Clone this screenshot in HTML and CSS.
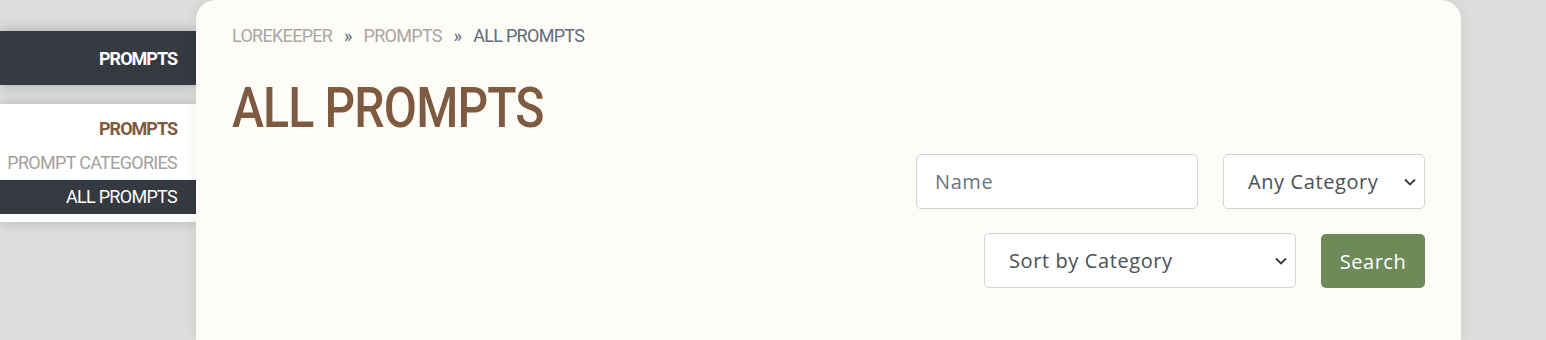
FILE: index.html
```html
<!DOCTYPE html>
<html lang="en">
<head>
    <meta charset="UTF-8">
    <title>All Prompts</title>
    <link rel="stylesheet" href="styles.css">
</head>
<body>
    <div class="pagina">
        <div class="lateral">
            <div class="lateral-topo">PROMPTS</div>
            <div class="lateral-menu">
                <div class="menu-titulo">PROMPTS</div>
                <a class="menu-item" href="#">PROMPT CATEGORIES</a>
                <a class="menu-item ativo" href="#">ALL PROMPTS</a>
            </div>
        </div>
        <div class="conteudo">
            <div class="migalhas">
                <a href="#">LOREKEEPER</a>
                <span class="sep">&raquo;</span>
                <a href="#">PROMPTS</a>
                <span class="sep">&raquo;</span>
                <span class="atual">ALL PROMPTS</span>
            </div>
            <h1 class="titulo"><span>ALL PROMPTS</span></h1>
            <form class="busca">
                <div class="linha">
                    <input class="campo campo-nome" type="text" placeholder="Name">
                    <select class="campo seletor seletor-cat">
                        <option>Any Category</option>
                    </select>
                </div>
                <div class="linha">
                    <select class="campo seletor seletor-ordem">
                        <option>Sort by Category</option>
                    </select>
                    <button class="botao" type="button">Search</button>
                </div>
            </form>
        </div>
    </div>
</body>
</html>
```

FILE: styles.css
```css
body {
    margin: 0;
    background-color: #dddddd;
    font-family: "Roboto", "Liberation Sans", sans-serif;
    overflow: hidden;
}

.pagina {
    display: flex;
    align-items: flex-start;
    height: 340px;
}

.lateral {
    width: 196px;
    flex-shrink: 0;
    margin-top: 31px;
}

.lateral-topo {
    background-color: #343a40;
    color: white;
    font-weight: bold;
    font-size: 18px;
    letter-spacing: -1px;
    text-align: right;
    height: 54px;
    line-height: 56px;
    padding-right: 19px;
    box-shadow: 0 0 12px rgba(0, 0, 0, 0.25);
}

.lateral-menu {
    background-color: white;
    margin-top: 19px;
    padding: 8px 0 8px;
    box-shadow: 0 0 12px rgba(0, 0, 0, 0.2);
}

.menu-titulo,
.menu-item {
    display: block;
    text-align: right;
    padding-right: 19px;
    font-size: 18px;
    letter-spacing: -0.7px;
    line-height: 34px;
    text-decoration: none;
}

.menu-titulo {
    color: #7d5a40;
    font-weight: bold;
    letter-spacing: -1px;
}

.menu-item {
    color: #a49f9c;
}

.menu-item.ativo {
    background-color: #343a40;
    color: white;
}

.conteudo {
    width: 1265px;
    height: 340px;
    box-sizing: border-box;
    background-color: #fdfcf7;
    border-radius: 20px 20px 0 0;
    padding: 24px 36px 0 36px;
    box-shadow: 0 0 14px rgba(0, 0, 0, 0.08);
}

.migalhas {
    font-size: 18px;
    letter-spacing: -0.7px;
    line-height: 24px;
    color: #aaa6a3;
}

.migalhas a {
    color: #aaa6a3;
    text-decoration: none;
}

.migalhas .sep {
    color: #5f6b7a;
    margin: 0 8px;
}

.migalhas .atual {
    color: #5f6b7a;
}

.titulo {
    margin: 28px 0 0;
    font-size: 56px;
    line-height: 64px;
    font-weight: 500;
    letter-spacing: -1px;
    color: #7d5a40;
}

.titulo span {
    display: inline-block;
    transform: scaleX(0.86);
    transform-origin: left;
}

.busca {
    display: flex;
    flex-direction: column;
    align-items: flex-end;
    gap: 24px;
    margin-top: 14px;
}

.linha {
    display: flex;
    gap: 25px;
}

.campo {
    box-sizing: border-box;
    height: 55px;
    background-color: white;
    border: 1px solid #ced4da;
    border-radius: 5px;
    font-family: "Open Sans", "Lato", sans-serif;
    font-size: 20px;
    letter-spacing: 0.6px;
    color: #495057;
    padding: 0 18px;
}

.campo::placeholder {
    color: #6c757d;
}

.campo-nome {
    width: 282px;
}

.seletor {
    -webkit-appearance: none;
    appearance: none;
    padding-left: 24px;
    background-image: url("data:image/svg+xml,%3Csvg xmlns='http://www.w3.org/2000/svg' width='12' height='8' viewBox='0 0 12 8'%3E%3Cpath d='M1 1.5l5 5 5-5' fill='none' stroke='%23343a40' stroke-width='1.8'/%3E%3C/svg%3E");
    background-repeat: no-repeat;
    background-position: right 8px center;
}

.seletor-cat {
    width: 202px;
}

.seletor-ordem {
    width: 312px;
}

.botao {
    height: 54px;
    margin-top: 1px;
    width: 104px;
    border: 0;
    border-radius: 5px;
    background-color: #6e8a58;
    color: white;
    font-family: "Open Sans", "Lato", sans-serif;
    font-size: 20px;
    letter-spacing: 0.5px;
}
```
